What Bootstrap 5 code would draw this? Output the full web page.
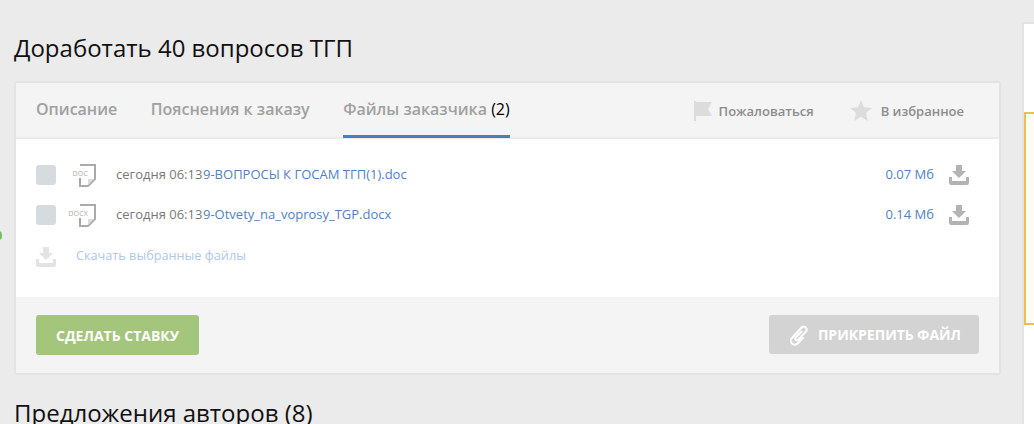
<!DOCTYPE html>
<html lang="ru">
<head>
    <meta charset="UTF-8">
    <title>Доработать 40 вопросов ТГП</title>
    <link href="https://cdn.jsdelivr.net/npm/bootstrap@5.3.0/dist/css/bootstrap.min.css" rel="stylesheet">
    <style>
        html, body { height: 424px; overflow: hidden; }
        body { background: #ebebeb; font-family: "Open Sans", sans-serif; color: #000; position: relative; }
        .page-wrap { height: 424px; }
        .main-col { width: 1001px; padding-left: 14px; flex: none; }
        .page-title { font-size: 24px; font-weight: 400; line-height: 30px; margin: 33px 0 18px; color: #111; }
        .page-title-2 { margin: 23px 0 0; }
        .task-box { border: 2px solid #e3e3e3; border-radius: 3px; background: #fff; height: 294px; }
        .task-head { height: 56px; background: #f4f4f4; border-bottom: 2px solid #ebebeb; padding: 0 20px; }
        .tab-item { font-size: 16px; font-weight: 600; color: #a0a0a0; line-height: 22px; padding: 15px 0 14px; margin-right: 33.5px; height: 55px; text-decoration: none; }
        .tab-item.on { border-bottom: 3px solid #4a7ebb; }
        .tab-item b { font-weight: 400; color: #000; }
        .head-act { font-size: 13px; font-weight: 600; color: #8c8c8c; text-decoration: none; }
        .head-act span { padding-top: 3px; }
        .task-body { height: 158px; padding: 16px 20px 0; font-size: 13px; }
        .file-row { height: 40px; }
        .fake-check { width: 20px; height: 20px; background: #d5dbdf; border-radius: 3px; flex: none; }
        .doc-wrap { width: 40px; flex: none; position: relative; height: 24px; }
        .doc-label { position: absolute; right: 7px; top: 6px; font-size: 7px; line-height: 9px; color: #aaa; background: #fff; padding: 0 1px; letter-spacing: .2px; }
        .file-time { width: 107px; color: #777; flex: none; padding-left: 20px; }
        .file-link { color: #4f82c6; text-decoration: none; }
        .file-size { color: #4f82c6; margin-right: 15px; }
        .dl-all { color: #afc8e8; font-size: 12.7px; text-decoration: none; margin-left: 20px; margin-top: -2px; }
        .task-foot { height: 76px; background: #f4f4f4; padding: 18px 20px 0; }
        .btn-bid { background: #a3c67c; border: 0; color: #fff; font-size: 14px; font-weight: 700; height: 40px; width: 163px; border-radius: 3px; padding: 0; }
        .btn-attach { background: #d3d3d3; border: 0; color: #fff; font-size: 14px; font-weight: 700; height: 39px; width: 210px; border-radius: 3px; padding: 0 18px 0 19px; }
        .side-col { width: 12px; margin-left: 21px; margin-top: 22px; background: #fff; border-left: 2px solid #e3e3e3; border-top: 2px solid #e3e3e3; height: 402px; flex: none; }
        .side-note { margin-top: 88px; height: 213px; background: #fffef2; border: 2px solid #f4bd50; border-right: 0; }
        .green-dot { position: absolute; left: -4px; top: 231px; width: 6px; height: 9px; background: #6fbf5a; border-radius: 50%; }
    </style>
</head>
<body>
    <div class="green-dot"></div>
    <div class="page-wrap d-flex">
        <div class="main-col">
            <h1 class="page-title">Доработать 40 вопросов ТГП</h1>

            <div class="task-box d-flex flex-column">
                <!-- Tabs -->
                <div class="task-head d-flex align-items-start">
                    <a class="tab-item" href="#">Описание</a>
                    <a class="tab-item" href="#">Пояснения к заказу</a>
                    <a class="tab-item on" href="#">Файлы заказчика <b>(2)</b></a>
                    <div class="ms-auto d-flex align-items-center" style="height:55px">
                        <a class="head-act d-flex align-items-center" href="#" style="margin-right:36px">
                            <svg width="18" height="20" viewBox="0 0 18 20" style="margin-right:7px"><path d="M0 0h2v20H0zM2 1h16l-4 7 4 7H2z" fill="#dcdcdc"/></svg>
                            <span>Пожаловаться</span>
                        </a>
                        <a class="head-act d-flex align-items-center" href="#" style="margin-right:15px">
                            <svg width="22" height="21" viewBox="0 0 21 20" style="margin-right:9px"><path d="M10.500 0l3 7 7.500.6-5.700 4.900 1.800 7.500-6.600-4-6.600 4 1.800-7.500L0 7.600 7.500 7z" fill="#dcdcdc"/></svg>
                            <span>В избранное</span>
                        </a>
                    </div>
                </div>

                <!-- Files -->
                <div class="task-body">
                    <div class="file-row d-flex align-items-center">
                        <span class="fake-check"></span>
                        <span class="doc-wrap">
                            <svg width="40" height="24" viewBox="0 0 40 24"><path d="M24 2h15v14l-7 7h-8V10" fill="none" stroke="#aaa" stroke-width="2"/><path d="M32 22v-6h6z" fill="#ddd"/></svg>
                            <span class="doc-label">DOC</span>
                        </span>
                        <span class="file-time">сегодня 06:13</span>
                        <a class="file-link" href="#">9-ВОПРОСЫ К ГОСАМ ТГП(1).doc</a>
                        <span class="file-size ms-auto">0.07 Мб</span>
                        <svg width="20" height="20" viewBox="0 0 20 20" style="margin-right:10px"><path d="M7 0h6v6h4l-7 7-7-7h4z" fill="#b3b3b3"/><path d="M0 12h3v4h14v-4h3v6a2 2 0 0 1-2 2H2a2 2 0 0 1-2-2z" fill="#b3b3b3"/></svg>
                    </div>
                    <div class="file-row d-flex align-items-center">
                        <span class="fake-check"></span>
                        <span class="doc-wrap">
                            <svg width="40" height="24" viewBox="0 0 40 24"><path d="M24 2h15v14l-7 7h-8V10" fill="none" stroke="#aaa" stroke-width="2"/><path d="M32 22v-6h6z" fill="#ddd"/></svg>
                            <span class="doc-label">DOCX</span>
                        </span>
                        <span class="file-time">сегодня 06:13</span>
                        <a class="file-link" href="#">9-Otvety_na_voprosy_TGP.docx</a>
                        <span class="file-size ms-auto">0.14 Мб</span>
                        <svg width="20" height="20" viewBox="0 0 20 20" style="margin-right:10px"><path d="M7 0h6v6h4l-7 7-7-7h4z" fill="#b3b3b3"/><path d="M0 12h3v4h14v-4h3v6a2 2 0 0 1-2 2H2a2 2 0 0 1-2-2z" fill="#b3b3b3"/></svg>
                    </div>
                    <div class="d-flex align-items-center" style="height:44px">
                        <svg width="20" height="20" viewBox="0 0 20 20"><path d="M7 0h6v6h4l-7 7-7-7h4z" fill="#e3e3e3"/><path d="M0 12h3v4h14v-4h3v6a2 2 0 0 1-2 2H2a2 2 0 0 1-2-2z" fill="#e3e3e3"/></svg>
                        <a class="dl-all" href="#">Скачать выбранные файлы</a>
                    </div>
                </div>

                <!-- Buttons -->
                <div class="task-foot d-flex justify-content-between align-items-start">
                    <button class="btn btn-bid" type="button">СДЕЛАТЬ СТАВКУ</button>
                    <button class="btn btn-attach d-flex align-items-center justify-content-between" type="button">
                        <svg width="22" height="22" viewBox="0 0 22 22"><path d="M13.500 7.500l-6 6.300a1.700 1.700 0 0 0 2.500 2.200L18.500 7a3.200 3.200 0 0 0-4.500-4L4 14a3.800 3.800 0 0 0 5.500 5.500l5.500-5.500" fill="none" stroke="#fff" stroke-width="2" stroke-linecap="round"/></svg>
                        ПРИКРЕПИТЬ ФАЙЛ
                    </button>
                </div>
            </div>

            <h2 class="page-title page-title-2">Предложения авторов (8)</h2>
        </div>

        <div class="side-col">
            <div class="side-note"></div>
        </div>
    </div>
    <script src="https://cdn.jsdelivr.net/npm/bootstrap@5.3.0/dist/js/bootstrap.bundle.min.js"></script>
</body>
</html>
